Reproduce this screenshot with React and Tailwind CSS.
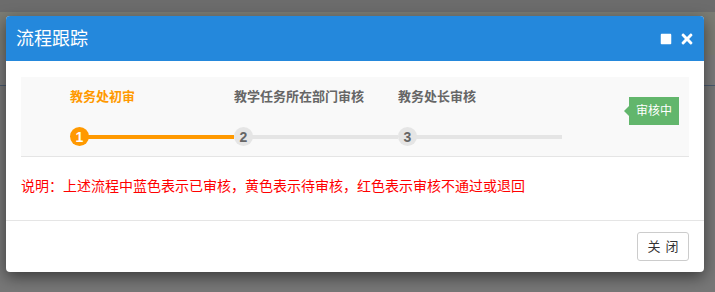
import React from "react";
import { FaSquare, FaTimes } from "react-icons/fa";

const font = { fontFamily: '"Liberation Sans", "Noto Sans CJK SC", sans-serif' };

function Step({ n, label, active, lineActive }) {
  return (
    <div className="w-[164px] shrink-0 flex flex-col">
      <div className={`h-[20px] leading-[20px] text-[13px] font-bold whitespace-nowrap ${active ? "text-[#ff9900]" : "text-[#666]"}`}>
        {label}
      </div>
      <div className="relative mt-[20px] h-[19px] flex items-center">
        <div className={`absolute left-[9px] right-0 top-[8px] h-[4px] ${lineActive ? "bg-[#ff9900]" : "bg-[#e5e5e5]"}`} />
        <div
          className={`relative w-[19px] h-[19px] rounded-full flex items-center justify-center text-[14px] font-bold leading-none ${
            active ? "bg-[#ff9900] text-white" : "bg-[#e5e5e5] text-[#666]"
          }`}
        >
          {n}
        </div>
      </div>
    </div>
  );
}

export default function App() {
  return (
    <div className="relative w-[715px] h-[292px] overflow-hidden bg-[#777777]" style={font}>
      {/* dimmed page behind */}
      <div className="flex flex-col">
        <div className="h-[12px] bg-[#6c6c6c]" />
        <div className="h-[43px] bg-[#7b7c74]" />
        <div className="h-[30px] bg-[#7a7a7a]" />
        <div className="h-[1px] bg-[#4a5a6e]" />
      </div>

      {/* modal */}
      <div className="absolute left-[6px] top-[16px] w-[698px] h-[256px] bg-white rounded-[4px] shadow-[0_5px_15px_rgba(0,0,0,0.5)] overflow-hidden flex flex-col">
        <div className="h-[45px] bg-[#2488dc] flex items-center justify-between pl-[10px] pr-[9px]">
          <div className="text-white text-[18px] leading-none">流程跟踪</div>
          <div className="flex items-center gap-[7px] text-white">
            <FaSquare size={12} />
            <FaTimes size={16} />
          </div>
        </div>

        <div className="px-[15px] pt-[16px] border-b border-[#e5e5e5] h-[160px]">
          <div className="relative bg-[#f9f9f9] border-b border-[#e5e5e5] h-[80px] pt-[10px] pl-[49px] flex">
            <Step n="1" label="教务处初审" active lineActive />
            <Step n="2" label="教学任务所在部门审核" />
            <Step n="3" label="教务处长审核" />
            <div className="absolute right-[10px] top-[20px] h-[28px] w-[50px] flex items-center justify-center bg-[#62b66c] text-white text-[12px] leading-none">
              <span className="absolute left-[-5px] top-[9px] w-0 h-0 border-y-[5px] border-y-transparent border-r-[5px] border-r-[#62b66c]" />
              审核中
            </div>
          </div>
          <div className="mt-[19px] text-[14px] leading-[20px] text-[#ff0000] whitespace-nowrap">
            说明：上述流程中蓝色表示已审核，黄色表示待审核，红色表示审核不通过或退回
          </div>
        </div>

        <div className="flex-1 flex justify-end items-start pt-[11px] pr-[15px]">
          <button className="h-[29px] w-[52px] border border-[#cccccc] rounded-[3px] bg-white text-[#333] text-[13px] leading-none flex items-center justify-center gap-[5px]">
            <span>关</span>
            <span>闭</span>
          </button>
        </div>
      </div>
    </div>
  );
}
